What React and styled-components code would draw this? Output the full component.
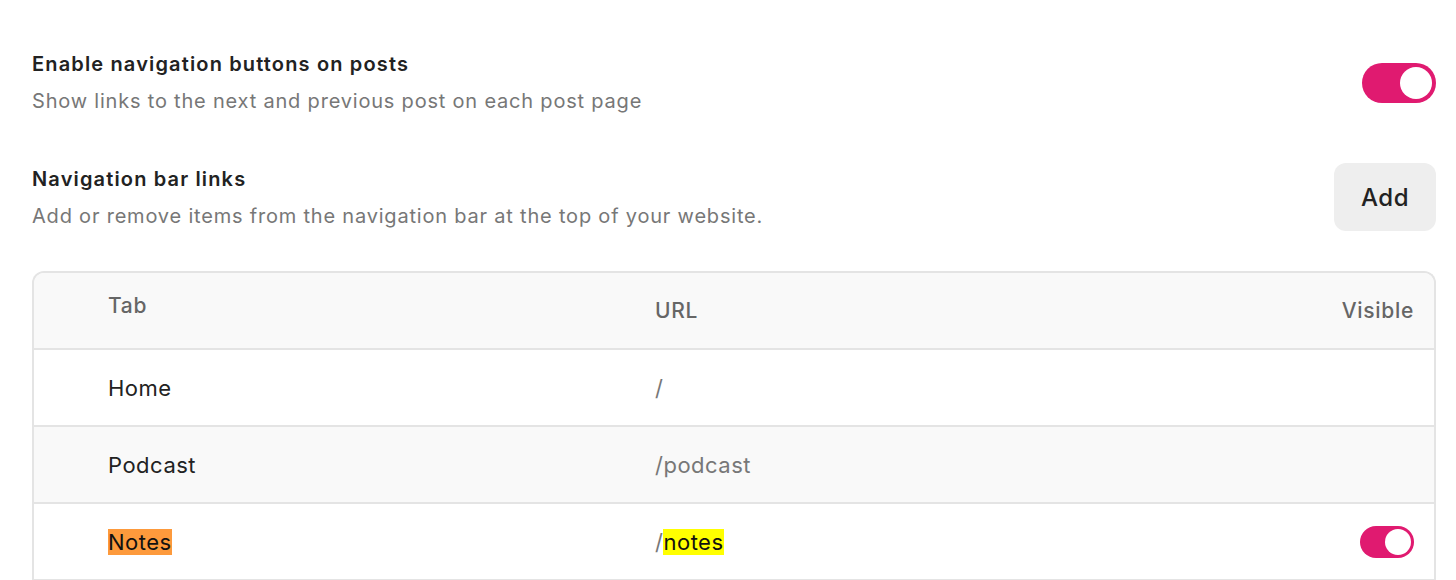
import React from "react";
import styled, { createGlobalStyle } from "styled-components";

const GlobalStyle = createGlobalStyle`
  body {
    margin: 0;
    background: #ffffff;
    font-family: Inter, "Noto Sans", "Liberation Sans", sans-serif;
    color: #222222;
  }
`;

const links = [
  { tab: "Home", url: "/", visible: false },
  { tab: "Podcast", url: "/podcast", visible: false },
  { tab: "Notes", url: "/", urlMark: "notes", visible: true, marked: true },
];

const App = () => {
  return (
    <Page>
      <GlobalStyle />
      <Setting gap={48}>
        <SettingText>
          <Title>Enable navigation buttons on posts</Title>
          <Description>Show links to the next and previous post on each post page</Description>
        </SettingText>
        <Toggle size="large" on />
      </Setting>

      <Setting gap={40}>
        <SettingText>
          <Title>Navigation bar links</Title>
          <Description>Add or remove items from the navigation bar at the top of your website.</Description>
        </SettingText>
        <AddButton>Add</AddButton>
      </Setting>

      <Table>
        <HeaderRow>
          <HeadCell raised>Tab</HeadCell>
          <HeadCell>URL</HeadCell>
          <HeadCell align="right">Visible</HeadCell>
        </HeaderRow>
        {links.map((link, i) => (
          <Row key={link.tab} shaded={i % 2 === 1}>
            <Cell>{link.marked ? <Mark color="#fd9a3c">{link.tab}</Mark> : link.tab}</Cell>
            <UrlCell>
              {link.url}
              {link.urlMark && <Mark color="#ffff00">{link.urlMark}</Mark>}
            </UrlCell>
            <Cell align="right">{link.visible && <Toggle size="small" on />}</Cell>
          </Row>
        ))}
      </Table>
    </Page>
  );
};

const Toggle = ({ size, on }) => (
  <Track size={size} on={on ? 1 : 0}>
    <Knob size={size} />
  </Track>
);

const Page = styled.div`
  padding: 50px 20px 0 32px;
  display: flex;
  flex-direction: column;
`;

const Setting = styled.div`
  display: flex;
  align-items: center;
  justify-content: space-between;
  margin-bottom: ${(p) => p.gap}px;
`;

const SettingText = styled.div`
  display: flex;
  flex-direction: column;
  gap: 9px;
`;

const Title = styled.div`
  font-size: 20px;
  line-height: 28px;
  font-weight: 600;
  letter-spacing: 1.15px;
  color: #222222;
`;

const Description = styled.div`
  font-size: 20px;
  line-height: 28px;
  letter-spacing: 0.8px;
  color: #777777;
`;

const Track = styled.div`
  box-sizing: border-box;
  width: ${(p) => (p.size === "small" ? 54 : 74)}px;
  height: ${(p) => (p.size === "small" ? 32 : 40)}px;
  border-radius: 999px;
  background: #e01a70;
  padding: ${(p) => (p.size === "small" ? 3 : 4)}px;
  display: flex;
  justify-content: flex-end;
  align-items: center;
`;

const Knob = styled.div`
  width: ${(p) => (p.size === "small" ? 26 : 32)}px;
  height: ${(p) => (p.size === "small" ? 26 : 32)}px;
  border-radius: 50%;
  background: #ffffff;
`;

const AddButton = styled.button`
  width: 102px;
  height: 68px;
  border: none;
  border-radius: 12px;
  background: #eeeeee;
  font-family: inherit;
  font-size: 24px;
  font-weight: 500;
  letter-spacing: 0.5px;
  color: #222222;
`;

const Table = styled.div`
  border: 2px solid #e4e4e4;
  border-bottom: none;
  border-radius: 12px 12px 0 0;
  overflow: hidden;
`;

const HeaderRow = styled.div`
  display: grid;
  grid-template-columns: 547px 1fr auto;
  align-items: center;
  height: 75px;
  padding: 0 20px 0 74px;
  background: #f9f9f9;
  border-bottom: 2px solid #e4e4e4;
`;

const HeadCell = styled.div`
  font-size: 21px;
  font-weight: 500;
  letter-spacing: 0.7px;
  color: #666666;
  text-align: ${(p) => p.align || "left"};
  padding-bottom: ${(p) => (p.raised ? 10 : 0)}px;
`;

const Row = styled(HeaderRow)`
  background: ${(p) => (p.shaded ? "#f9f9f9" : "#ffffff")};
  height: 75px;
`;

const Cell = styled.div`
  font-size: 22px;
  letter-spacing: 0.5px;
  color: #222222;
  display: flex;
  justify-content: ${(p) => (p.align === "right" ? "flex-end" : "flex-start")};
`;

const UrlCell = styled.div`
  font-size: 22px;
  letter-spacing: 0.5px;
  color: #777777;
`;

const Mark = styled.span`
  background: ${(p) => p.color};
  color: #111111;
`;

export default App;
